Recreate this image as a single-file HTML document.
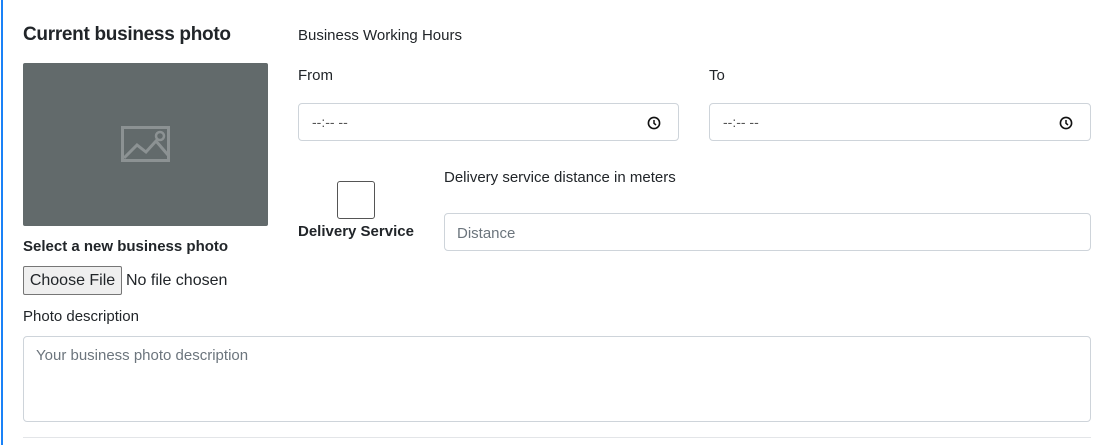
<!DOCTYPE html>
<html><head><style>
*{box-sizing:border-box;margin:0;padding:0}
body{width:1111px;height:445px;background:#fff;font-family:"Liberation Sans",sans-serif;color:#212529;position:relative;overflow:hidden}
.a{position:absolute;white-space:nowrap}
.in{position:absolute;border:1px solid #ced4da;border-radius:4px;background:#fff}
.ph{color:#6c757d;font-size:15px}
</style></head><body>
<div class="a" style="left:1px;top:0;width:2px;height:445px;background:#1a82f7"></div>
<div class="a" style="left:23px;top:24px;font-size:19px;font-weight:bold;color:#212529;letter-spacing:-0.3px">Current business photo</div>
<div class="a" style="left:23px;top:63px;width:245px;height:163px;background:#626a6b;border-radius:2px"></div>
<svg class="a" style="left:121px;top:126px" width="50" height="37" viewBox="0 0 50 37"><rect x="1.5" y="1.5" width="46" height="33" fill="none" stroke="#8c9293" stroke-width="3"/><path d="M3 32 L16 19 L25 26 L35 15 L47 29" fill="none" stroke="#8c9293" stroke-width="3"/><circle cx="39" cy="10" r="4" fill="none" stroke="#8c9293" stroke-width="2.5"/></svg>
<div class="a" style="left:23px;top:238px;font-size:15px;font-weight:bold">Select a new business photo</div>
<div class="a" style="left:23px;top:266px;width:99px;height:29px;border:1px solid #767676;border-radius:2px;background:#efefef;font-size:16px;line-height:27px;text-align:center">Choose File</div>
<div class="a" style="left:126px;top:272px;font-size:16px">No file chosen</div>
<div class="a" style="left:23px;top:308px;font-size:15px">Photo description</div>
<div class="in" style="left:23px;top:336px;width:1068px;height:86px"></div>
<div class="a ph" style="left:36px;top:347px">Your business photo description</div>
<div class="a" style="left:23px;top:437px;width:1068px;height:1px;background:#e3e5e8"></div>

<div class="a" style="left:298px;top:27px;font-size:15px">Business Working Hours</div>
<div class="a" style="left:298px;top:67px;font-size:15px">From</div>
<div class="a" style="left:709px;top:67px;font-size:15px">To</div>
<div class="in" style="left:298px;top:103px;width:381px;height:38px"></div>
<div class="in" style="left:709px;top:103px;width:382px;height:38px"></div>
<div class="a" style="left:312px;top:114px;font-size:14px;color:#555">--:-- --</div>
<div class="a" style="left:723px;top:114px;font-size:14px;color:#555">--:-- --</div>
<svg class="a" style="left:647px;top:116px" width="14" height="14" viewBox="0 0 14 14"><circle cx="7" cy="7" r="5.6" fill="none" stroke="#111" stroke-width="1.6"/><path d="M7 4v3.3l2 1.7" fill="none" stroke="#111" stroke-width="1.5"/></svg>
<svg class="a" style="left:1059px;top:116px" width="14" height="14" viewBox="0 0 14 14"><circle cx="7" cy="7" r="5.6" fill="none" stroke="#111" stroke-width="1.6"/><path d="M7 4v3.3l2 1.7" fill="none" stroke="#111" stroke-width="1.5"/></svg>
<div class="a" style="left:337px;top:181px;width:38px;height:38px;border:1px solid #555;border-radius:3px"></div>
<div class="a" style="left:298px;top:223px;font-size:15px;font-weight:bold">Delivery Service</div>
<div class="a" style="left:444px;top:169px;font-size:15px">Delivery service distance in meters</div>
<div class="in" style="left:444px;top:213px;width:647px;height:38px"></div>
<div class="a ph" style="left:457px;top:225px">Distance</div>
</body></html>
